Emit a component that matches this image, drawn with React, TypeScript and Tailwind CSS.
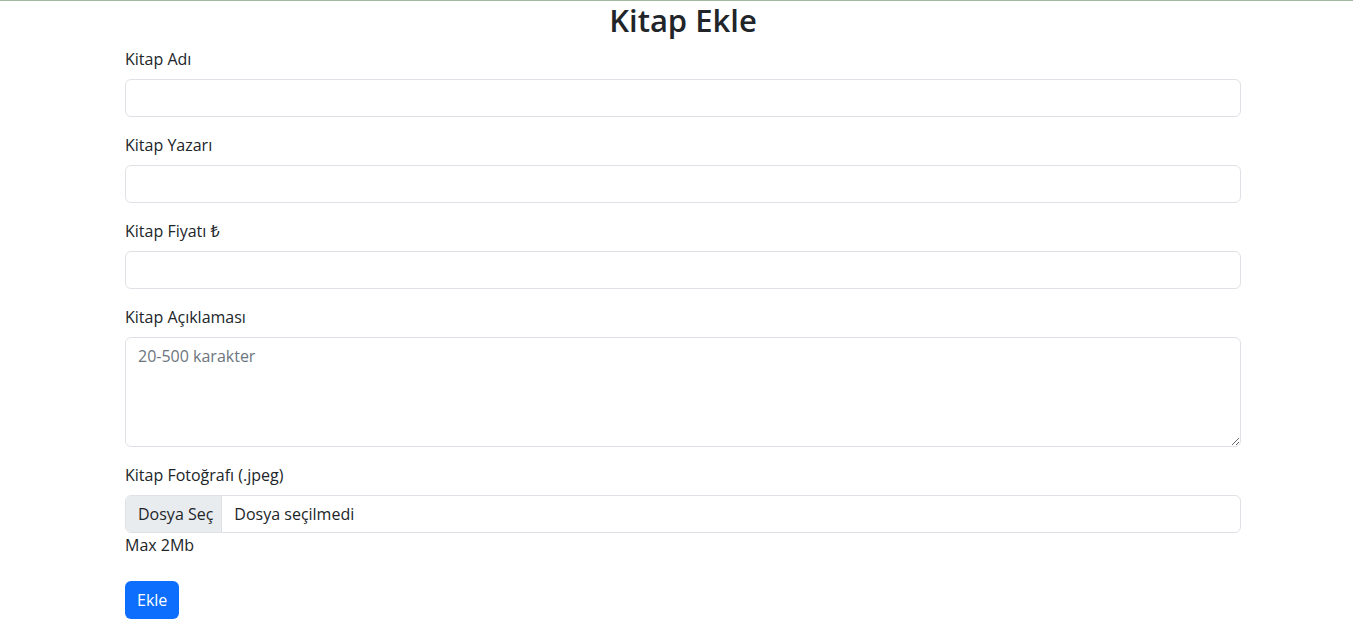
import * as React from "react";

const font = { fontFamily: '"Open Sans", "Noto Sans", sans-serif' };

const inputCls =
  "block w-full h-[38px] rounded-[6px] border border-[#dee2e6] bg-white px-3 text-base text-[#212529] outline-none";

function Field({ label, children }: { label: string; children: React.ReactNode }) {
  return (
    <div className="mb-4">
      <label className="mb-2 block text-base leading-6">{label}</label>
      {children}
    </div>
  );
}

export default function App() {
  return (
    <div className="min-h-[643px] border-t border-[#a3b8a0] bg-white text-[#212529]" style={font}>
      <div className="ml-[125px] w-[1116px]">
        <h2 className="mb-2 text-center text-[31px] font-semibold leading-[38px]">Kitap Ekle</h2>
        <form>
          <Field label="Kitap Adı">
            <input type="text" className={inputCls} />
          </Field>
          <Field label="Kitap Yazarı">
            <input type="text" className={inputCls} />
          </Field>
          <Field label="Kitap Fiyatı ₺">
            <input type="text" className={inputCls} />
          </Field>
          <Field label="Kitap Açıklaması">
            <textarea
              rows={4}
              placeholder="20-500 karakter"
              className="block h-[110px] w-full resize-y rounded-[6px] border border-[#dee2e6] bg-white px-3 py-[6px] text-base leading-6 outline-none placeholder:text-[#6c757d]"
            />
          </Field>
          <div>
            <label className="mb-2 block text-base leading-6">Kitap Fotoğrafı (.jpeg)</label>
            <div className="flex h-[38px] w-full items-stretch overflow-hidden rounded-[6px] border border-[#dee2e6]">
              <span className="flex items-center border-r border-[#dee2e6] bg-[#e9ecef] pl-3 pr-[8px] leading-6">Dosya Seç</span>
              <span className="flex items-center px-3 leading-6">Dosya seçilmedi</span>
            </div>
            <div className="leading-6">Max 2Mb</div>
          </div>
          <button
            type="button"
            className="mt-6 h-[38px] rounded-[6px] bg-[#0d6efd] px-3 text-base leading-6 text-white"
          >
            Ekle
          </button>
        </form>
      </div>
    </div>
  );
}
